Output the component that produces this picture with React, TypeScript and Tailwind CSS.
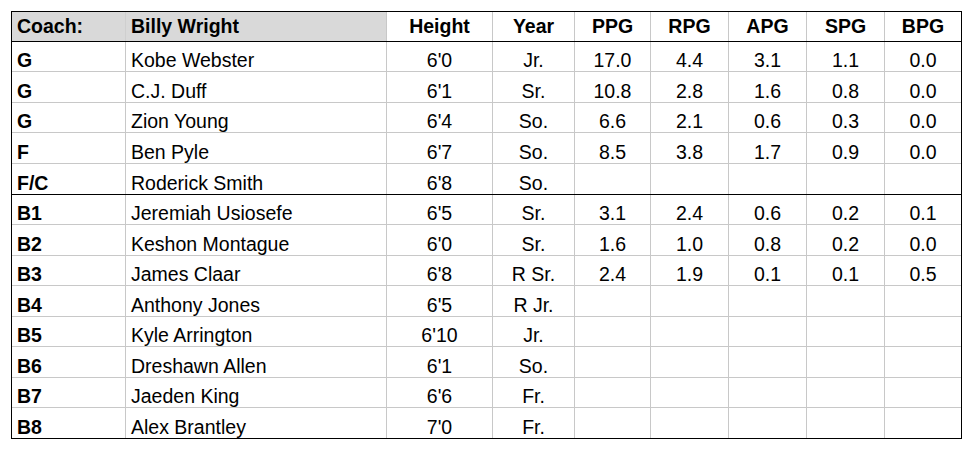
const cols = 'grid grid-cols-[114px_261px_106px_82px_76px_78px_78px_78px_76px]';

type Player = {
  pos: string;
  name: string;
  height: string;
  year: string;
  stats: string[];
};

const players: Player[] = [
  { pos: 'G', name: 'Kobe Webster', height: "6'0", year: 'Jr.', stats: ['17.0', '4.4', '3.1', '1.1', '0.0'] },
  { pos: 'G', name: 'C.J. Duff', height: "6'1", year: 'Sr.', stats: ['10.8', '2.8', '1.6', '0.8', '0.0'] },
  { pos: 'G', name: 'Zion Young', height: "6'4", year: 'So.', stats: ['6.6', '2.1', '0.6', '0.3', '0.0'] },
  { pos: 'F', name: 'Ben Pyle', height: "6'7", year: 'So.', stats: ['8.5', '3.8', '1.7', '0.9', '0.0'] },
  { pos: 'F/C', name: 'Roderick Smith', height: "6'8", year: 'So.', stats: ['', '', '', '', ''] },
  { pos: 'B1', name: 'Jeremiah Usiosefe', height: "6'5", year: 'Sr.', stats: ['3.1', '2.4', '0.6', '0.2', '0.1'] },
  { pos: 'B2', name: 'Keshon Montague', height: "6'0", year: 'Sr.', stats: ['1.6', '1.0', '0.8', '0.2', '0.0'] },
  { pos: 'B3', name: 'James Claar', height: "6'8", year: 'R Sr.', stats: ['2.4', '1.9', '0.1', '0.1', '0.5'] },
  { pos: 'B4', name: 'Anthony Jones', height: "6'5", year: 'R Jr.', stats: ['', '', '', '', ''] },
  { pos: 'B5', name: 'Kyle Arrington', height: "6'10", year: 'Jr.', stats: ['', '', '', '', ''] },
  { pos: 'B6', name: 'Dreshawn Allen', height: "6'1", year: 'So.', stats: ['', '', '', '', ''] },
  { pos: 'B7', name: 'Jaeden King', height: "6'6", year: 'Fr.', stats: ['', '', '', '', ''] },
  { pos: 'B8', name: 'Alex Brantley', height: "7'0", year: 'Fr.', stats: ['', '', '', '', ''] },
];

// row heights include the bottom border; the 5th row closes the starters with a black rule
const rowClasses = [
  'h-[30px] border-b border-[#c8c8c8]',
  'h-[31px] border-b border-[#c8c8c8]',
  'h-[30px] border-b border-[#c8c8c8]',
  'h-[31px] border-b border-[#c8c8c8]',
  'h-[31px] border-b border-black',
  'h-[30px] border-b border-[#c8c8c8]',
  'h-[31px] border-b border-[#c8c8c8]',
  'h-[30px] border-b border-[#c8c8c8]',
  'h-[31px] border-b border-[#c8c8c8]',
  'h-[30px] border-b border-[#c8c8c8]',
  'h-[31px] border-b border-[#c8c8c8]',
  'h-[30px] border-b border-[#c8c8c8]',
  'h-[30px]',
];

const headers = ['Height', 'Year', 'PPG', 'RPG', 'APG', 'SPG', 'BPG'];

function Cell({ children, last, left, bold }: { children?: React.ReactNode; last?: boolean; left?: boolean; bold?: boolean }) {
  return (
    <div
      className={`flex items-end leading-[21px] whitespace-nowrap ${left ? 'pl-[5px]' : 'justify-center'} ${
        last ? '' : 'border-r border-[#c8c8c8]'
      } ${bold ? 'font-bold' : ''}`}
    >
      {children}
    </div>
  );
}

export default function App() {
  return (
    <div className="w-[978px] h-[452px] bg-white pl-[11px] pt-[11px] font-['Liberation_Sans',Arial,sans-serif] text-[19.5px] text-black leading-normal">
      <div className="w-[951px] border border-black">
        <div className={`${cols} h-[30px] border-b border-black`}>
          <div className="flex items-center pl-[5px] bg-[#d9d9d9] border-r border-[#cfcfcf] font-bold">Coach:</div>
          <div className="flex items-center pl-[5px] bg-[#d9d9d9] border-r border-[#c8c8c8] font-bold">Billy Wright</div>
          {headers.map((h, i) => (
            <div
              key={h}
              className={`flex items-center justify-center font-bold ${i < headers.length - 1 ? 'border-r border-[#c8c8c8]' : ''}`}
            >
              {h}
            </div>
          ))}
        </div>

        {players.map((p, i) => (
          <div key={p.pos + p.name} className={`${cols} ${rowClasses[i]}`}>
            <Cell left bold>
              {p.pos}
            </Cell>
            <Cell left>{p.name}</Cell>
            <Cell>{p.height}</Cell>
            <Cell>{p.year}</Cell>
            {p.stats.map((s, j) => (
              <Cell key={j} last={j === p.stats.length - 1}>
                {s}
              </Cell>
            ))}
          </div>
        ))}
      </div>
    </div>
  );
}
